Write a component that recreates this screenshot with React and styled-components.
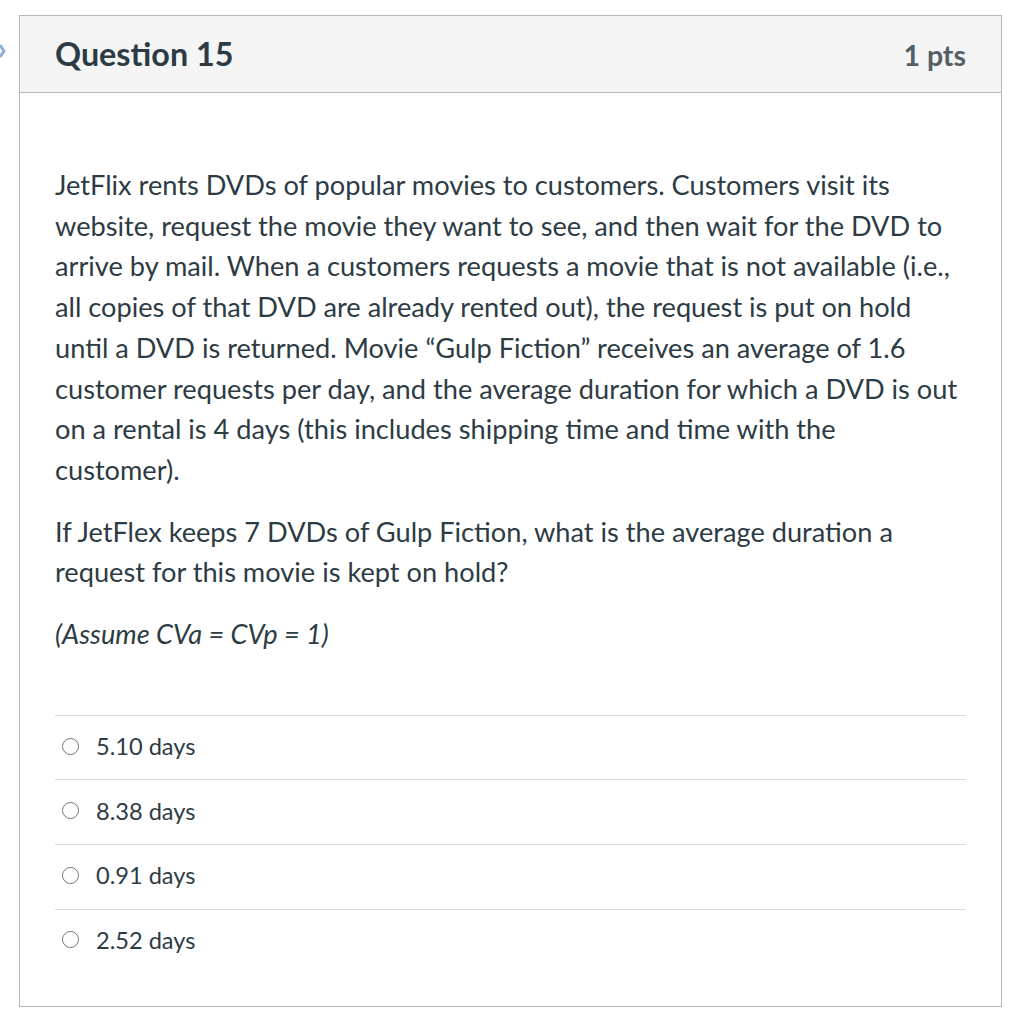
import React from "react";
import styled, { createGlobalStyle } from "styled-components";

const Global = createGlobalStyle`
  html, body { margin: 0; padding: 0; background: #fff; }
  body { font-family: Lato, "Noto Sans", sans-serif; color: #2d3b45; }
`;

const Page = styled.div`
  position: relative;
  padding: 15px 12px 0 19px;
`;

const EdgeMark = styled.svg`
  position: absolute;
  left: 0;
  top: 44px;
`;

const Card = styled.section`
  width: 981px;
  height: 990px;
  border: 1px solid #b4b8bb;
  box-sizing: content-box;
`;

const Header = styled.header`
  display: flex;
  align-items: center;
  justify-content: space-between;
  height: 76px;
  padding: 0 35px 0 35px;
  background: #f5f5f5;
  border-bottom: 1px solid #b4b8bb;
`;

const Title = styled.h2`
  margin: 0;
  font-size: 32.3px;
  font-weight: 700;
  color: #2d3b45;
  margin-top: -1px;
`;

const Points = styled.span`
  font-size: 28.5px;
  font-weight: 700;
  color: #555f66;
  margin-top: 2px;
`;

const Body = styled.div`
  padding: 72px 35px 0 35px;
`;

const Para = styled.p`
  margin: 0 0 21px 0;
  font-size: 27.2px;
  line-height: 40.7px;
  font-style: ${(p) => (p.$italic ? "italic" : "normal")};
`;

const Answers = styled.div`
  margin-top: 60px;
`;

const AnswerRow = styled.label`
  display: flex;
  align-items: center;
  box-sizing: border-box;
  height: 64.6px;
  padding-bottom: 3px;
  border-top: 1px solid #dadcde;
  padding-left: 7px;
  gap: 17px;
  font-size: 23.6px;
  color: #2d3b45;
`;

const Radio = styled.span`
  width: 17px;
  height: 17px;
  box-sizing: border-box;
  border: 1.5px solid #6b7780;
  border-radius: 50%;
  flex: none;
`;

const answers = ["5.10 days", "8.38 days", "0.91 days", "2.52 days"];

export default function App() {
  return (
    <>
      <Global />
      <Page>
        <EdgeMark width="6" height="14" viewBox="0 0 6 14">
          <path d="M0 1 L4 7 L0 13" fill="none" stroke="#8fb0d6" strokeWidth="3" strokeLinejoin="round" />
        </EdgeMark>
        <Card>
          <Header>
            <Title>Question 15</Title>
            <Points>1 pts</Points>
          </Header>
          <Body>
            <Para>
              JetFlix rents DVDs of popular movies to customers. Customers visit its
              website, request the movie they want to see, and then wait for the DVD to
              arrive by mail. When a customers requests a movie that is not available (i.e.,
              all copies of that DVD are already rented out), the request is put on hold
              until a DVD is returned. Movie “Gulp Fiction” receives an average of 1.6
              customer requests per day, and the average duration for which a DVD is out
              on a rental is 4 days (this includes shipping time and time with the
              customer).
            </Para>
            <Para>
              If JetFlex keeps 7 DVDs of Gulp Fiction, what is the average duration a
              request for this movie is kept on hold?
            </Para>
            <Para $italic>(Assume CVa = CVp = 1)</Para>
            <Answers>
              {answers.map((a) => (
                <AnswerRow key={a}>
                  <Radio />
                  {a}
                </AnswerRow>
              ))}
            </Answers>
          </Body>
        </Card>
      </Page>
    </>
  );
}
